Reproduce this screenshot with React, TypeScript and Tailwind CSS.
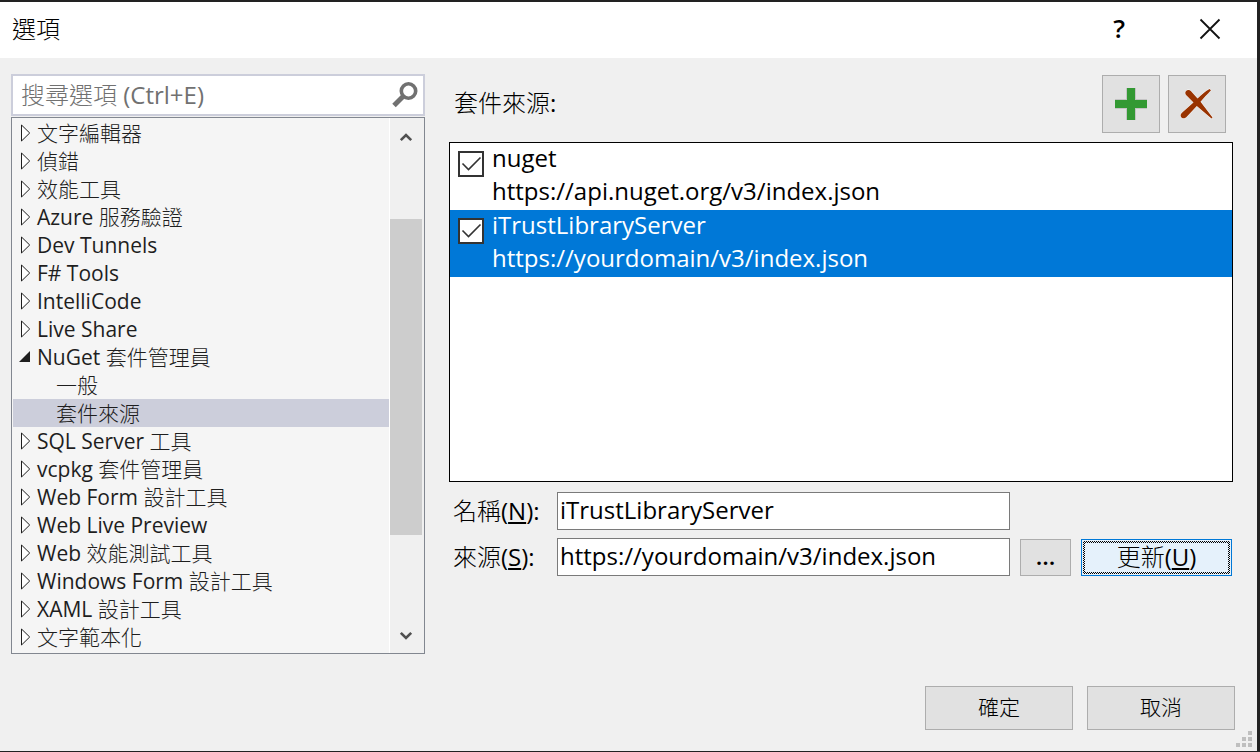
import { useState, type ReactNode } from "react";

const FONT = "font-['Open_Sans','Noto_Sans_CJK_TC_Light','Noto_Sans_CJK_TC',sans-serif]";

type TreeItem = { label: string; kind: "closed" | "open" | "child" };

const treeItems: TreeItem[] = [
  { label: "文字編輯器", kind: "closed" },
  { label: "偵錯", kind: "closed" },
  { label: "效能工具", kind: "closed" },
  { label: "Azure 服務驗證", kind: "closed" },
  { label: "Dev Tunnels", kind: "closed" },
  { label: "F# Tools", kind: "closed" },
  { label: "IntelliCode", kind: "closed" },
  { label: "Live Share", kind: "closed" },
  { label: "NuGet 套件管理員", kind: "open" },
  { label: "一般", kind: "child" },
  { label: "套件來源", kind: "child" },
  { label: "SQL Server 工具", kind: "closed" },
  { label: "vcpkg 套件管理員", kind: "closed" },
  { label: "Web Form 設計工具", kind: "closed" },
  { label: "Web Live Preview", kind: "closed" },
  { label: "Web 效能測試工具", kind: "closed" },
  { label: "Windows Form 設計工具", kind: "closed" },
  { label: "XAML 設計工具", kind: "closed" },
  { label: "文字範本化", kind: "closed" },
];

const sources = [
  { name: "nuget", url: "https://api.nuget.org/v3/index.json" },
  { name: "iTrustLibraryServer", url: "https://yourdomain/v3/index.json" },
];

function Expander({ open }: { open: boolean }) {
  return open ? (
    <svg width="12" height="18" viewBox="0 0 12 18" aria-hidden="true">
      <path d="M11 3V14H0Z" fill="#1e1e1e" />
    </svg>
  ) : (
    <svg width="12" height="18" viewBox="0 0 12 18" aria-hidden="true">
      <path d="M2.5 1V17L10.7 9Z" fill="#fff" stroke="#1e1e1e" />
    </svg>
  );
}

function Chevron({ up }: { up?: boolean }) {
  return (
    <svg width="14" height="10" viewBox="0 0 14 10" fill="none" stroke="#505050" strokeWidth="2.6" aria-hidden="true">
      <path d={up ? "M1.8 8.2L7 3L12.2 8.2" : "M1.8 2.8L7 8L12.2 2.8"} />
    </svg>
  );
}

function OptionTree() {
  const [selected, setSelected] = useState("套件來源");
  return (
    <div className="flex border border-[#828790] bg-[#f5f5f5] text-[21px] text-[#1e1e1e]">
      <ul role="tree" aria-label="選項" className="min-w-0 flex-1 pb-0.5 pl-px pt-px">
        {treeItems.map(({ label, kind }) => (
          <li key={label} role="treeitem" aria-selected={label === selected}>
            <button
              type="button"
              onClick={() => setSelected(label)}
              className={`flex h-7 w-full items-center gap-1.5 whitespace-nowrap text-left ${
                label === selected ? "bg-[#cccedb]" : ""
              } ${kind === "child" ? "pl-[43px]" : "pl-1.5"}`}
            >
              {kind !== "child" && <Expander open={kind === "open"} />}
              <span className="leading-[26px]">{label}</span>
            </button>
          </li>
        ))}
      </ul>
      <div className="flex w-[35px] flex-col border-l border-white bg-[#f0f0f0] pr-0.5">
        <button type="button" aria-label="向上捲動" className="flex h-[38px] items-center justify-center">
          <Chevron up />
        </button>
        <div className="flex flex-1 flex-col pb-[82px] pt-[63px]">
          <div className="flex-1 bg-[#cdcdcd]" />
        </div>
        <button type="button" aria-label="向下捲動" className="flex h-9 items-center justify-center">
          <Chevron />
        </button>
      </div>
    </div>
  );
}

function PushButton({ className, children, label }: { className: string; children: ReactNode; label?: string }) {
  return (
    <button
      type="button"
      aria-label={label}
      className={`flex items-center justify-center border border-[#adadad] bg-[#e1e1e1] ${className}`}
    >
      {children}
    </button>
  );
}

function SourceList() {
  const [selected, setSelected] = useState(1);
  return (
    <ul className="h-[340px] border border-black bg-white text-2xl">
      {sources.map(({ name, url }, i) => (
        <li
          key={name}
          onClick={() => setSelected(i)}
          className={`flex h-[67px] gap-2 pl-2 ${i === selected ? "bg-[#0078d7] text-white" : ""}`}
        >
          <span className="mt-2 grid size-[26px]">
            <input
              id={`source-${i}`}
              type="checkbox"
              defaultChecked
              className="peer col-start-1 row-start-1 size-[26px] appearance-none border-2 border-[#333] bg-white"
            />
            <svg
              viewBox="0 0 26 26"
              fill="none"
              stroke="#333"
              strokeWidth="1.6"
              className="pointer-events-none invisible col-start-1 row-start-1 size-[26px] peer-checked:visible"
              aria-hidden="true"
            >
              <path d="M4.5 12.5L10.5 18.5L22.5 6.5" />
            </svg>
          </span>
          <label htmlFor={`source-${i}`} className="-mt-0.5 text-2xl leading-[33px]">
            <span className="block">{name}</span>
            <span className="block">{url}</span>
          </label>
        </li>
      ))}
    </ul>
  );
}

export default function App() {
  return (
    <div
      className={`relative flex min-h-screen flex-col border-b border-r-[3px] border-t-2 border-[#222] bg-[#f0f0f0] text-black ${FONT}`}
    >
      <header className="flex h-14 items-center justify-between bg-white pb-0.5 pl-3 pr-9">
        <h1 className="text-2xl">選項</h1>
        <div className="flex items-center gap-[74px]">
          <button type="button" aria-label="說明" className="pb-0.5 text-[26px] font-semibold leading-8">
            ?
          </button>
          <button type="button" aria-label="關閉">
            <svg width="22" height="22" viewBox="0 0 22 22" stroke="#111" strokeWidth="1.8" aria-hidden="true">
              <path d="M1.5 1.5L20.5 20.5M20.5 1.5L1.5 20.5" />
            </svg>
          </button>
        </div>
      </header>

      <main className="flex gap-6 pl-[11px] pr-6 pt-4">
        <section className="flex w-[414px] shrink-0 flex-col gap-px">
          <label className="flex h-[42px] items-center border-2 border-[#cccedb] bg-white pl-2 pr-1">
            <input
              type="search"
              aria-label="搜尋選項"
              placeholder="搜尋選項 (Ctrl+E)"
              className="min-w-0 flex-1 bg-transparent text-2xl outline-none placeholder:text-[#717171]"
            />
            <svg width="28" height="28" viewBox="0 0 28 28" fill="none" stroke="#717171" aria-hidden="true">
              <circle cx="17.5" cy="10" r="7.2" strokeWidth="3.6" />
              <path d="M12.5 15L3 24.5" strokeWidth="5" />
            </svg>
          </label>
          <OptionTree />
        </section>

        <section className="min-w-0 flex-1">
          <div className="flex items-center justify-between pb-[9px] pl-[5px] pr-[7px] pt-px">
            <h2 className="pb-0.5 text-2xl">套件來源:</h2>
            <div className="flex gap-2">
              <PushButton label="新增" className="size-[58px]">
                <svg width="34" height="34" viewBox="0 0 34 34" aria-hidden="true">
                  <path d="M12 1H22V12H33V22H22V33H12V22H1V12H12Z" fill="#c4c4c4" />
                  <path d="M13 1H21V13H33V21H21V33H13V21H1V13H13Z" fill="#339933" />
                </svg>
              </PushButton>
              <PushButton label="移除" className="size-[58px]">
                <svg width="34" height="34" viewBox="0 0 34 34" aria-hidden="true">
                  <path
                    d="M6 4C7.5 2.3 10 2.6 11.5 4.8L17.5 11.5C21 8 25 4.5 29.5 2L31 3.2C27.5 7 23.5 11 20.5 14.8L32.5 30.5L31.5 31.5L16.8 19L6.5 30C4.5 32 1.5 31.6 .8 29.5C.2 27.8 1 26.6 2.5 25.3L13.5 15.5L6.3 8.3C5 6.9 5 5.2 6 4Z"
                    fill="#993300"
                    stroke="#fff"
                    strokeWidth="1"
                    paintOrder="stroke"
                  />
                </svg>
              </PushButton>
            </div>
          </div>

          <SourceList />

          <form className="grid grid-cols-[94px_1fr_51px_151px] items-end gap-x-2.5 gap-y-2 pl-1 pr-px pt-2.5 text-2xl">
            <label htmlFor="name" className="whitespace-nowrap leading-[38px]">
              名稱(<u className="underline-offset-2">N</u>):
            </label>
            <input
              id="name"
              defaultValue="iTrustLibraryServer"
              className="h-[38px] min-w-0 border border-[#7a7a7a] bg-white px-0.5 pb-1 outline-none"
            />
            <label htmlFor="source" className="col-start-1 whitespace-nowrap leading-[38px]">
              來源(<u className="underline-offset-2">S</u>):
            </label>
            <input
              id="source"
              defaultValue="https://yourdomain/v3/index.json"
              className="h-[38px] min-w-0 border border-[#7a7a7a] bg-white px-0.5 pb-1 outline-none"
            />
            <PushButton label="瀏覽" className="h-[37px] pb-1 font-semibold">
              ...
            </PushButton>
            <button type="button" className="h-[37px] border border-[#0078d7] bg-[#e5f1fb] p-px">
              <span className="block h-full bg-[repeating-conic-gradient(#000_0_25%,#e5f1fb_0_50%)] bg-[length:2px_2px] p-0.5">
                <span className="flex h-full items-center justify-center bg-[#e5f1fb] pb-0.5">
                  更新(<u className="underline-offset-2">U</u>)
                </span>
              </span>
            </button>
          </form>
        </section>
      </main>

      <footer className="mt-auto flex justify-end gap-3.5 pb-[21px] pr-[22px] pt-8 text-[21px]">
        <PushButton className="h-11 w-[148px]">確定</PushButton>
        <PushButton className="h-11 w-[148px]">取消</PushButton>
      </footer>
      <svg
        width="16"
        height="16"
        viewBox="0 0 16 16"
        fill="#bfbfbf"
        className="pointer-events-none absolute bottom-1 right-[5px]"
        aria-hidden="true"
      >
        <path d="M12 0h4v4h-4zM6 6h4v4h-4zM12 6h4v4h-4zM0 12h4v4h-4zM6 12h4v4h-4zM12 12h4v4h-4z" />
      </svg>
    </div>
  );
}
